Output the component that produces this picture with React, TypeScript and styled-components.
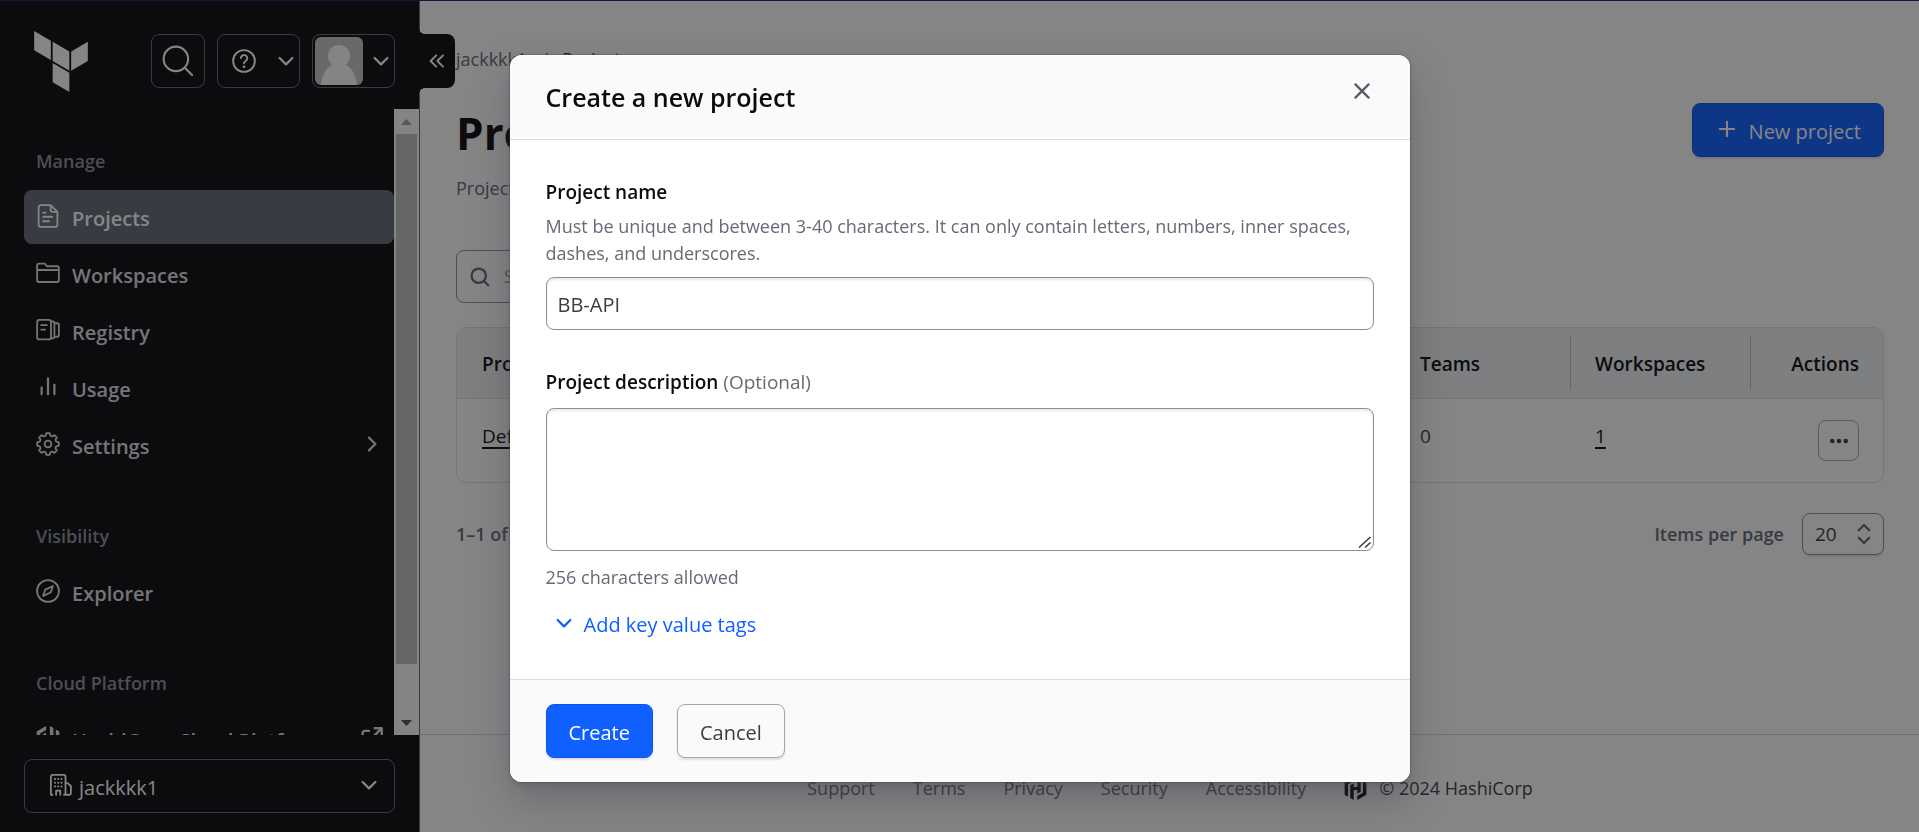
import React from 'react';
import styled, { createGlobalStyle, css } from 'styled-components';
import { SiHashicorp } from 'react-icons/si';

const GlobalStyle = createGlobalStyle`
  *, *::before, *::after { box-sizing: border-box; }
  body {
    margin: 0;
    overflow: hidden;
    background: #ffffff;
    color: #3b3d45;
    font-family: "Segoe UI", "Open Sans", "Noto Sans", sans-serif;
    font-size: 18px;
    line-height: 27px;
  }
  h1, h2, p, ul { margin: 0; padding: 0; }
  ul { list-style: none; }
  a { color: inherit; text-decoration: none; }
  button, input, textarea, select { font: inherit; color: inherit; margin: 0; }
  button { padding: 0; background: none; border: 0; cursor: pointer; }
  svg { flex: none; display: block; }
`;

/* ---------- icons (16-unit grid) ---------- */

type IconProps = { size?: number; weight?: number; children?: React.ReactNode };

const Icon = ({ size = 24, weight = 1.5, children }: IconProps) => (
  <svg
    width={size}
    height={size}
    viewBox="0 0 16 16"
    fill="none"
    stroke="currentColor"
    strokeWidth={weight}
    strokeLinecap="round"
    strokeLinejoin="round"
    aria-hidden="true"
  >
    {children}
  </svg>
);

const ChevronDown = () => <Icon><path d="M3.75 6 8 10.25 12.25 6" /></Icon>;
const ChevronRight = () => <Icon><path d="M6 3.75 10.25 8 6 12.25" /></Icon>;
const ChevronsLeft = () => (
  <Icon weight={1.3}><path d="M7.5 4.25 3.75 8l3.75 3.75M12 4.25 8.25 8 12 11.75" /></Icon>
);
const SearchIcon = ({ size = 24, weight = 1.5 }: IconProps) => (
  <Icon size={size} weight={weight}><circle cx="7" cy="7" r="5.75" /><path d="m11.2 11.2 3.4 3.4" /></Icon>
);
const HelpIcon = () => (
  <Icon weight={1.3}>
    <circle cx="8" cy="8" r="7.25" />
    <path d="M5.9 6a2.15 2.15 0 1 1 3.2 2c-.7.4-1.1.8-1.1 1.5" />
    <path d="M8 11.9h.01" strokeWidth="1.8" />
  </Icon>
);
const FileIcon = () => (
  <Icon weight={1.2}>
    <path d="M9.75.75h-6.5a1.5 1.5 0 0 0-1.5 1.5v11.5a1.5 1.5 0 0 0 1.5 1.5h9.5a1.5 1.5 0 0 0 1.5-1.5V5.25L9.75.75V4A1.25 1.25 0 0 0 11 5.25h3.25" />
    <path d="M4.75 5.75h1.75M4.75 8.5h6M4.75 11.5h4" />
  </Icon>
);
const FolderIcon = () => (
  <Icon weight={1.2}>
    <path d="M.75 3A1.25 1.25 0 0 1 2 1.75h3.5a1 1 0 0 1 .8.4l1 1.35H14a1.25 1.25 0 0 1 1.25 1.25v8A1.25 1.25 0 0 1 14 14H2a1.25 1.25 0 0 1-1.25-1.25zM.75 6h14.5" />
  </Icon>
);
const RegistryIcon = () => (
  <Icon weight={1.2}>
    <rect x=".75" y="1.25" width="9.25" height="13" rx="1.5" />
    <path d="M10 2.25h1a1.25 1.25 0 0 1 1.25 1.25v8.75A1.25 1.25 0 0 1 11 13.5h-1M12.25 3.5h1.9a1.1 1.1 0 0 1 1.1 1.1v6.8a1.1 1.1 0 0 1-1.1 1.1h-1.9M3.5 4.75h3.75M3.5 7.75h2.5" />
  </Icon>
);
const UsageIcon = () => (
  <Icon><path d="M3.75 8.25v4.5M8 2.25v10.5M12.25 6.5v6.25" /></Icon>
);

const gearPath = Array.from({ length: 8 }, (_, tooth) => {
  const at = (deg: number, r: number) => {
    const a = ((tooth * 45 + deg - 90) * Math.PI) / 180;
    return `${(8 + r * Math.cos(a)).toFixed(2)} ${(8 + r * Math.sin(a)).toFixed(2)}`;
  };
  return `${tooth ? 'L' : 'M'}${at(-15, 5.9)} L${at(-9, 7.3)} L${at(9, 7.3)} L${at(15, 5.9)} Q${at(22.5, 5.2)} ${at(30, 5.9)}`;
}).join(' ');

const GearIcon = () => (
  <Icon weight={1.2}><path d={`${gearPath}Z`} /><circle cx="8" cy="8" r="2.25" /></Icon>
);
const CompassIcon = () => (
  <Icon weight={1.2}><circle cx="8" cy="8" r="7.3" /><path d="M11.3 4.7 9.8 8.9l-5.1 2.4 1.5-4.2z" /></Icon>
);
const ExternalIcon = () => (
  <Icon weight={1.6}><path d="M9.75 1.5h4.75v4.75M14.25 1.75 7.5 8.5M6 3.25H3.25A1.5 1.5 0 0 0 1.75 4.75v8a1.5 1.5 0 0 0 1.5 1.5h8a1.5 1.5 0 0 0 1.5-1.5V10" /></Icon>
);
const OrgIcon = () => (
  <Icon weight={1.2}>
    <path d="M1.25 14.5V2.5A1.25 1.25 0 0 1 2.5 1.25h7.25A1.25 1.25 0 0 1 11 2.5v12M11 6.75h1.4l2.2 1.9v4.6a1.25 1.25 0 0 1-1.25 1.25H11M4.75 14.5v-2.75h2.75v2.75M1.25 14.5h1M10 14.5h1" />
    <path d="M4 4h.01M6.15 4h.01M8.3 4h.01M4 6.5h.01M6.15 6.5h.01M8.3 6.5h.01M4 9h.01M6.15 9h.01M8.3 9h.01" strokeWidth="1.4" />
  </Icon>
);
const PlusIcon = () => <Icon weight={1.4}><path d="M8 3.2v9.6M3.2 8h9.6" /></Icon>;
const CloseIcon = () => <Icon><path d="m3.6 3.6 8.8 8.8M12.4 3.6l-8.8 8.8" /></Icon>;
const UpDownIcon = () => <Icon><path d="M4.5 5.5 8 2l3.5 3.5M4.5 10.5 8 14l3.5-3.5" /></Icon>;
const MoreIcon = () => (
  <Icon weight={3}><path d="M3.5 8h.01M8 8h.01M12.5 8h.01" /></Icon>
);
const TerraformLogo = () => (
  <svg width="54" height="61" viewBox="1.44 0 21.12 24" fill="currentColor" aria-hidden="true">
    <path d="M1.44 0v7.575l6.561 3.79V3.787zm21.12 4.227-6.561 3.791v7.574l6.56-3.787zM8.72 4.23v7.575l6.561 3.787V8.018zm0 8.405v7.575L15.28 24v-7.578z" />
  </svg>
);
const AvatarPicture = () => (
  <svg width="48" height="48" viewBox="0 0 48 48" aria-hidden="true">
    <rect width="48" height="48" rx="6" fill="#c6c6c6" />
    <circle cx="24" cy="19" r="11" fill="#fdfdfd" />
    <path d="M6 48c1-10 5-17 11-20h14c6 3 10 10 11 20z" fill="#fdfdfd" />
  </svg>
);

/* ---------- shell ---------- */

const Shell = styled.div`
  display: flex;
  height: 100vh;
  border-top: 1px solid #341068;
`;

const Sidebar = styled.aside`
  position: relative;
  display: flex;
  flex-direction: column;
  flex: none;
  width: 420px;
  background: #0c0c0e;
  border-right: 1px solid #656a76;
  color: #ffffff;
`;

const SidebarTop = styled.div`
  display: flex;
  align-items: center;
  gap: 12px;
  flex: none;
  height: 108px;
  padding: 12px 24px 0 34px;
`;

const HomeLink = styled.a`
  margin-right: auto;
`;

const TopButton = styled.button<{ $width: number; $flush?: boolean }>`
  display: flex;
  align-items: center;
  justify-content: space-between;
  width: ${(p) => p.$width}px;
  height: 54px;
  padding: ${(p) => (p.$flush ? '0 1px 0 2px' : '0 1px 0 14px')};
  border: 1px solid #656a76;
  border-radius: 8px;
`;

const SearchButton = styled(TopButton)`
  justify-content: center;
  padding: 0;
`;

const CollapseToggle = styled.button`
  position: absolute;
  top: 33px;
  left: 419px;
  display: flex;
  align-items: center;
  justify-content: center;
  width: 36px;
  height: 54px;
  border-radius: 0 8px 8px 0;
  background: #0c0c0e;
  color: #ffffff;

  &::before,
  &::after {
    content: "";
    position: absolute;
    left: 0;
    width: 6px;
    height: 6px;
  }
  &::before {
    top: -6px;
    background: radial-gradient(circle at 100% 0, transparent 6px, #0c0c0e 6px);
  }
  &::after {
    bottom: -6px;
    background: radial-gradient(circle at 100% 100%, transparent 6px, #0c0c0e 6px);
  }
`;

const NavViewport = styled.div`
  display: flex;
  flex: 1;
  min-height: 0;
`;

const Nav = styled.nav`
  flex: 1;
  padding: 40px 0 0 24px;
  overflow: hidden;
`;

const NavGroup = styled.section`
  & + & { margin-top: 52px; }
`;

const NavTitle = styled.h2`
  margin: 0 0 17px;
  padding-left: 12px;
  color: #8c909c;
  font-size: 18px;
  font-weight: 600;
  line-height: 24px;
`;

const NavList = styled.ul`
  display: grid;
  gap: 3px;
`;

const NavLink = styled.a<{ $active?: boolean }>`
  display: flex;
  align-items: center;
  gap: 12px;
  height: 54px;
  padding: 2px 10px 0 12px;
  border-radius: 8px;
  color: #dedfe3;
  font-size: 20px;
  font-weight: 600;
  ${(p) => p.$active && css`background: #656a76; color: #ffffff;`}

  & > svg { margin-bottom: 4px; }
  & > svg:last-child { margin-left: auto; }
`;

const ScrollTrack = styled.div`
  display: flex;
  flex-direction: column;
  align-items: center;
  width: 25px;
  background: #fcfcfc;
`;

const ScrollArrow = styled.span<{ $down?: boolean }>`
  display: grid;
  place-items: center;
  height: 25px;
  color: ${(p) => (p.$down ? '#505050' : '#a3a3a3')};
  svg { transform: ${(p) => (p.$down ? 'rotate(180deg)' : 'none')}; }
`;

const ScrollRail = styled.div`
  flex: 1;
  width: 21px;
`;

const ScrollThumb = styled.div`
  height: 92%;
  background: #c1c1c1;
`;

const SidebarBottom = styled.div`
  flex: none;
  padding: 24px 24px 19px;
`;

const OrgButton = styled.button`
  display: flex;
  align-items: center;
  gap: 6px;
  width: 100%;
  height: 54px;
  padding: 2px 13px 0 24px;
  border: 1px solid #656a76;
  border-radius: 8px;
  font-size: 20px;

  & > svg { margin-bottom: 4px; }
  & > svg:last-child { margin-left: auto; }
`;

/* ---------- page ---------- */

const Main = styled.main`
  display: flex;
  flex-direction: column;
  flex: 1;
  min-width: 0;
`;

const Content = styled.div`
  flex: 1;
  padding: 45px 35px 0 36px;
`;

const Breadcrumb = styled.nav`
  display: flex;
  gap: 14px;
  color: #656a76;
  a:last-child { color: #3b3d45; }
`;

const PageHeader = styled.header`
  display: flex;
  justify-content: space-between;
  align-items: flex-start;
  margin-top: 30px;
`;

const PageTitle = styled.h1`
  color: #0c0c0e;
  font-size: 44px;
  font-weight: 700;
  line-height: 60px;
`;

const PageText = styled.p`
  margin-top: 12px;
  color: #656a76;
`;

const Button = styled.button<{ $primary?: boolean }>`
  display: inline-flex;
  align-items: center;
  gap: 10px;
  height: 54px;
  padding: 2px 22px 0;
  border: 1px solid ${(p) => (p.$primary ? '#0c56e9' : '#a4a6ab')};
  border-radius: 8px;
  background: ${(p) => (p.$primary ? '#1060ff' : '#fafafa')};
  color: ${(p) => (p.$primary ? '#ffffff' : '#3b3d45')};
  font-size: 20px;
  box-shadow: 0 2px 2px #656a7630;

  svg { margin-bottom: 4px; }
`;

const SearchBox = styled.label`
  display: flex;
  align-items: center;
  gap: 12px;
  width: 420px;
  height: 53px;
  margin-top: 48px;
  padding: 0 13px;
  border: 1px solid #8c909c;
  border-radius: 8px;
  color: #656a76;

  input {
    flex: 1;
    min-width: 0;
    border: 0;
    background: none;
    outline: none;
  }
  input::placeholder { color: #8c909c; }
`;

const Table = styled.table`
  width: 100%;
  margin-top: 24px;
  table-layout: fixed;
  border: 1px solid #dedfe3;
  border-radius: 10px;
  border-spacing: 0;
  overflow: hidden;
`;

const Th = styled.th<{ $width?: number; $end?: boolean; $divided?: boolean }>`
  width: ${(p) => (p.$width ? `${p.$width}px` : 'auto')};
  padding: 8px 0;
  background: #f1f2f3;
  border-bottom: 1px solid #dedfe3;
  color: #0c0c0e;
  font-size: 19px;
  font-weight: 600;
  text-align: ${(p) => (p.$end ? 'right' : 'left')};

  span {
    display: block;
    padding: 15px 24px 12px;
    border-left: 1px solid ${(p) => (p.$divided ? '#c2c5cb' : 'transparent')};
  }
`;

const Td = styled.td<{ $action?: boolean }>`
  height: 82px;
  padding: ${(p) => (p.$action ? '21px 24px' : '24px 24px 0 25px')};
  vertical-align: top;
  font-size: 19px;
`;

const StrongLink = styled.a`
  color: #0c0c0e;
  text-decoration: underline;
  text-decoration-thickness: 2px;
  text-underline-offset: 4px;
`;

const MoreButton = styled.button`
  display: grid;
  place-items: center;
  width: 41px;
  height: 41px;
  margin-left: auto;
  border: 1px solid #a4a6ab;
  border-radius: 8px;
`;

const Pagination = styled.div`
  display: flex;
  align-items: center;
  justify-content: space-between;
  margin-top: 30px;
  color: #656a76;
  font-weight: 600;
`;

const PageSize = styled.label`
  display: flex;
  align-items: center;
  gap: 18px;
`;

const SelectWrap = styled.span`
  position: relative;
  display: block;

  select {
    appearance: none;
    display: block;
    width: 82px;
    height: 42px;
    padding: 0 12px;
    border: 1px solid #8c909c;
    border-radius: 8px;
    background: #ffffff;
    color: #3b3d45;
    font-size: 19px;
    font-weight: 400;
    box-shadow: 0 2px 2px #656a7630;
  }
  svg {
    position: absolute;
    top: 9px;
    right: 8px;
    pointer-events: none;
  }
`;

const Footer = styled.footer`
  display: flex;
  align-items: center;
  justify-content: center;
  gap: 38px;
  height: 98px;
  padding: 9px 35px 0 36px;
  border-top: 1px solid #d5d7db;
  color: #656a76;
`;

const Copyright = styled.span`
  display: flex;
  align-items: center;
  gap: 12px;
  color: #3b3d45;
  svg { color: #0c0c0e; }
`;

/* ---------- dialog ---------- */

const Overlay = styled.div`
  position: fixed;
  inset: 0;
  display: flex;
  align-items: flex-start;
  justify-content: center;
  padding-top: 55px;
  background: rgba(12, 12, 14, 0.5);
`;

const Dialog = styled.form`
  width: 900px;
  max-width: 95vw;
  border-radius: 12px;
  overflow: hidden;
  background: #ffffff;
  box-shadow: 0 0 0 1px #3b3d4540, 0 3px 4px #3b3d4540, 0 18px 36px #3b3d4559;
`;

const DialogHeader = styled.header`
  display: flex;
  align-items: flex-start;
  justify-content: space-between;
  padding: 24px 36px;
  background: #fafafa;
  border-bottom: 1px solid #dedfe3;
`;

const DialogTitle = styled.h2`
  color: #0c0c0e;
  font-size: 25px;
  font-weight: 600;
  line-height: 36px;
`;

const CloseButton = styled.button`
  color: #585b66;
`;

const DialogBody = styled.div`
  padding: 39px 36px 28px;
`;

const Field = styled.div`
  & + & { margin-top: 39px; }
`;

const Label = styled.label`
  display: block;
  color: #0c0c0e;
  font-size: 19px;
  font-weight: 600;
`;

const Optional = styled.span`
  color: #656a76;
  font-weight: 400;
`;

const Help = styled.p<{ $above?: boolean }>`
  margin-top: ${(p) => (p.$above ? 7 : 13)}px;
  color: #656a76;
`;

const controlStyle = css`
  display: block;
  width: 100%;
  border: 1px solid #8c909c;
  border-radius: 8px;
  background: #ffffff;
  color: #3b3d45;
  font-size: 20px;
  outline: none;
  box-shadow: inset 0 2px 3px #656a7626;
`;

const TextInput = styled.input`
  ${controlStyle}
  height: 53px;
  margin-top: 10px;
  padding: 2px 11px 0;
`;

const TextAreaWrap = styled.div`
  position: relative;
  margin-top: 12px;

  svg {
    position: absolute;
    right: 2px;
    bottom: 2px;
    color: #3b3d45;
    pointer-events: none;
  }
`;

const TextArea = styled.textarea`
  ${controlStyle}
  height: 143px;
  padding: 11px;
  resize: vertical;

  &::-webkit-resizer { background: transparent; }
`;

const TagsButton = styled.button`
  display: flex;
  align-items: center;
  gap: 8px;
  height: 54px;
  margin-top: 6px;
  padding: 0 6px;
  color: #1060ff;
  font-size: 20px;
  svg { margin-bottom: 2px; }
`;

const DialogFooter = styled.footer`
  display: flex;
  gap: 24px;
  padding: 24px 36px;
  background: #fafafa;
  border-top: 1px solid #dedfe3;
`;

type NavEntry = { label: string; icon: React.ReactNode; active?: boolean; trailing?: React.ReactNode };

const navGroups: { title: string; items: NavEntry[] }[] = [
  {
    title: 'Manage',
    items: [
      { label: 'Projects', icon: <FileIcon />, active: true },
      { label: 'Workspaces', icon: <FolderIcon /> },
      { label: 'Registry', icon: <RegistryIcon /> },
      { label: 'Usage', icon: <UsageIcon /> },
      { label: 'Settings', icon: <GearIcon />, trailing: <ChevronRight /> },
    ],
  },
  { title: 'Visibility', items: [{ label: 'Explorer', icon: <CompassIcon /> }] },
  {
    title: 'Cloud Platform',
    items: [{ label: 'HashiCorp Cloud Platform', icon: <SiHashicorp size={24} />, trailing: <ExternalIcon /> }],
  },
];

const footerLinks = ['Support', 'Terms', 'Privacy', 'Security', 'Accessibility'];

const Arrow = () => (
  <svg width="11" height="6" viewBox="0 0 11 6" fill="currentColor" aria-hidden="true">
    <path d="M5.5 0 11 6H0z" />
  </svg>
);

const ResizeGrip = () => (
  <svg width="14" height="14" viewBox="0 0 14 14" fill="none" stroke="currentColor" strokeWidth="1.6" aria-hidden="true">
    <path d="M1 12.5 12.5 2M7 12.5l5.5-5" />
  </svg>
);

export default function App() {
  return (
    <>
      <GlobalStyle />
      <Shell>
        <Sidebar>
          <SidebarTop>
            <HomeLink href="#" aria-label="Home"><TerraformLogo /></HomeLink>
            <SearchButton type="button" $width={54} aria-label="Search"><SearchIcon size={34} weight={1} /></SearchButton>
            <TopButton type="button" $width={83} aria-label="Help"><HelpIcon /><ChevronDown /></TopButton>
            <TopButton type="button" $width={83} $flush aria-label="Account"><AvatarPicture /><ChevronDown /></TopButton>
          </SidebarTop>
          <CollapseToggle type="button" aria-label="Collapse menu"><ChevronsLeft /></CollapseToggle>
          <NavViewport>
            <Nav>
              {navGroups.map((group) => (
                <NavGroup key={group.title}>
                  <NavTitle>{group.title}</NavTitle>
                  <NavList>
                    {group.items.map((item) => (
                      <li key={item.label}>
                        <NavLink href="#" $active={item.active}>
                          {item.icon}
                          <span>{item.label}</span>
                          {item.trailing}
                        </NavLink>
                      </li>
                    ))}
                  </NavList>
                </NavGroup>
              ))}
            </Nav>
            <ScrollTrack>
              <ScrollArrow><Arrow /></ScrollArrow>
              <ScrollRail><ScrollThumb /></ScrollRail>
              <ScrollArrow $down><Arrow /></ScrollArrow>
            </ScrollTrack>
          </NavViewport>
          <SidebarBottom>
            <OrgButton type="button"><OrgIcon /><span>jackkkk1</span><ChevronDown /></OrgButton>
          </SidebarBottom>
        </Sidebar>

        <Main>
          <Content>
            <Breadcrumb>
              <a href="#">jackkkk1</a>
              <span>/</span>
              <a href="#">Projects</a>
            </Breadcrumb>
            <PageHeader>
              <div>
                <PageTitle>Projects</PageTitle>
                <PageText>Projects let you organize your workspaces.</PageText>
              </div>
              <Button type="button" $primary><PlusIcon />New project</Button>
            </PageHeader>
            <SearchBox>
              <SearchIcon size={20} weight={1.8} />
              <input type="text" placeholder="Search" aria-label="Search projects" />
            </SearchBox>
            <Table>
              <thead>
                <tr>
                  <Th><span>Project name</span></Th>
                  <Th $width={175}><span>Teams</span></Th>
                  <Th $width={180} $divided><span>Workspaces</span></Th>
                  <Th $width={133} $divided $end><span>Actions</span></Th>
                </tr>
              </thead>
              <tbody>
                <tr>
                  <Td><StrongLink href="#">Default Project</StrongLink></Td>
                  <Td>0</Td>
                  <Td><StrongLink href="#">1</StrongLink></Td>
                  <Td $action><MoreButton type="button" aria-label="Project actions"><MoreIcon /></MoreButton></Td>
                </tr>
              </tbody>
            </Table>
            <Pagination>
              <span>1–1 of 1</span>
              <PageSize>
                Items per page
                <SelectWrap>
                  <select defaultValue="20">
                    <option>20</option>
                    <option>50</option>
                    <option>100</option>
                  </select>
                  <UpDownIcon />
                </SelectWrap>
              </PageSize>
            </Pagination>
          </Content>
          <Footer>
            {footerLinks.map((link) => <a key={link} href="#">{link}</a>)}
            <Copyright><SiHashicorp size={23} />© 2024 HashiCorp</Copyright>
          </Footer>
        </Main>
      </Shell>

      <Overlay>
        <Dialog role="dialog" aria-modal="true" aria-labelledby="dialog-title" onSubmit={(e) => e.preventDefault()}>
          <DialogHeader>
            <DialogTitle id="dialog-title">Create a new project</DialogTitle>
            <CloseButton type="button" aria-label="Close"><CloseIcon /></CloseButton>
          </DialogHeader>
          <DialogBody>
            <Field>
              <Label htmlFor="project-name">Project name</Label>
              <Help $above>
                Must be unique and between 3-40 characters. It can only contain letters, numbers, inner spaces, dashes, and underscores.
              </Help>
              <TextInput id="project-name" type="text" defaultValue="BB-API" />
            </Field>
            <Field>
              <Label htmlFor="project-description">Project description <Optional>(Optional)</Optional></Label>
              <TextAreaWrap>
                <TextArea id="project-description" />
                <ResizeGrip />
              </TextAreaWrap>
              <Help>256 characters allowed</Help>
            </Field>
            <TagsButton type="button"><ChevronDown />Add key value tags</TagsButton>
          </DialogBody>
          <DialogFooter>
            <Button type="submit" $primary>Create</Button>
            <Button type="button">Cancel</Button>
          </DialogFooter>
        </Dialog>
      </Overlay>
    </>
  );
}
